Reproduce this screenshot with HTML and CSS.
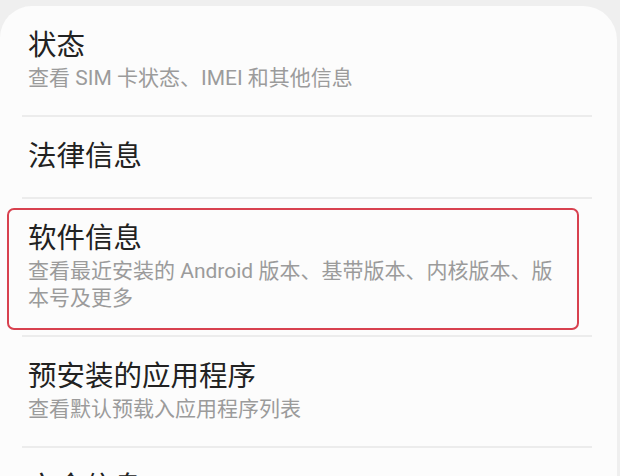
FILE: index.html
```html
<!DOCTYPE html>
<html lang="zh-CN">
<head>
<meta charset="utf-8">
<title>关于手机</title>
<link rel="stylesheet" href="styles.css">
</head>
<body>
<div class="screen">
  <div class="card">
    <div class="item">
      <div class="title">状态</div>
      <div class="sub">查看 SIM 卡状态、IMEI 和其他信息</div>
    </div>
    <div class="divider"></div>
    <div class="item">
      <div class="title">法律信息</div>
    </div>
    <div class="divider"></div>
    <div class="item highlighted">
      <div class="title">软件信息</div>
      <div class="sub">查看最近安装的 Android 版本、基带版本、内核版本、版<br>本号及更多</div>
      <div class="highlight-box"></div>
    </div>
    <div class="divider"></div>
    <div class="item">
      <div class="title">预安装的应用程序</div>
      <div class="sub">查看默认预载入应用程序列表</div>
    </div>
    <div class="divider"></div>
    <div class="item">
      <div class="title">安全信息</div>
    </div>
  </div>
</div>
</body>
</html>
```
FILE: styles.css
```css
html, body {
  margin: 0;
  padding: 0;
  background: #efefef;
}
body {
  font-family: Roboto, "Noto Sans CJK SC", sans-serif;
  width: 620px;
  height: 476px;
  overflow: hidden;
}
.screen {
  padding-top: 6px;
  padding-right: 3px;
}
.card {
  background: #fcfcfc;
  border-radius: 32px 34px 0 0;
  min-height: 470px;
}
.item {
  position: relative;
  padding: 23px 20px 23px 28px;
}
.title {
  font-size: 28.5px;
  line-height: 34px;
  color: #222222;
}
.sub {
  margin-top: 2px;
  font-size: 21px;
  line-height: 27px;
  color: #9b9b9b;
  white-space: nowrap;
}
.divider {
  height: 2px;
  background: #ececec;
  margin: 0 25px 0 22px;
}
.highlight-box {
  position: absolute;
  left: 7px;
  right: 38px;
  top: 9px;
  bottom: 5px;
  border: 2px solid #d8414f;
  border-radius: 7px;
}
```
